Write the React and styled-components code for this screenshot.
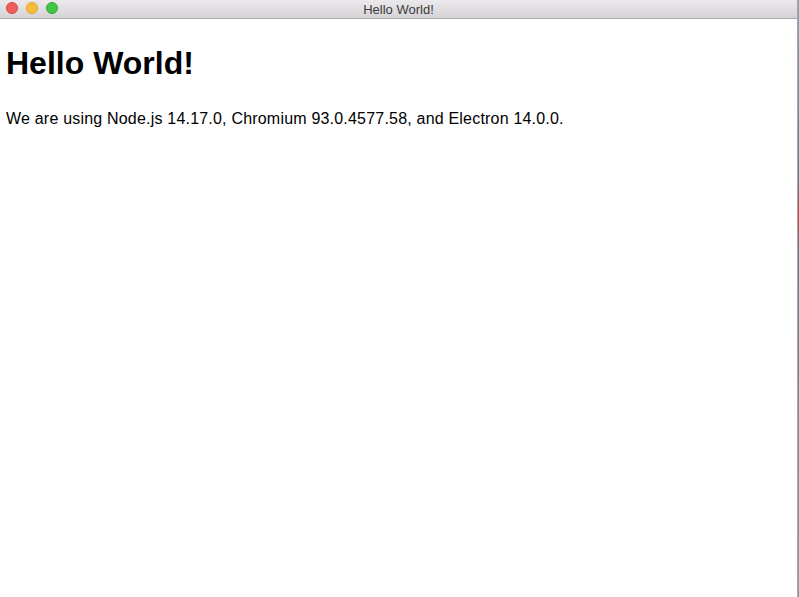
import React from 'react';
import styled, { createGlobalStyle } from 'styled-components';

const GlobalStyle = createGlobalStyle`
  html, body {
    margin: 0;
    padding: 0;
    height: 100%;
    background: #6f8fa6;
    overflow: hidden;
  }
  #root {
    height: 100%;
  }
`;

const Desktop = styled.div`
  display: flex;
  height: 597px;
  width: 799px;
  background: linear-gradient(180deg, #7fa3bd 0%, #5a7f98 30%, #c2453a 36%, #5d7f96 42%, #8a9aa6 100%);
`;

const Window = styled.div`
  width: 797px;
  height: 597px;
  display: flex;
  flex-direction: column;
  background: #ffffff;
  border-right: 1px solid #a8a8a8;
`;

const TitleBar = styled.div`
  position: relative;
  flex: 0 0 18px;
  display: flex;
  align-items: center;
  justify-content: center;
  background: linear-gradient(180deg, #ebe9eb 0%, #d5d3d5 100%);
  border-bottom: 1px solid #ababab;
  font-family: "Liberation Sans", Arial, sans-serif;
  font-size: 13px;
  color: #3b3b3b;
`;

const Lights = styled.div`
  position: absolute;
  left: 6px;
  top: 2px;
  display: flex;
  gap: 8px;
`;

const Light = styled.span`
  width: 12px;
  height: 12px;
  border-radius: 50%;
  box-sizing: border-box;
  background: ${p => p.color};
  border: 1px solid ${p => p.edge};
`;

const Content = styled.main`
  flex: 1;
  padding: 0 6px;
  font-family: "Liberation Sans", Arial, sans-serif;
  color: #000;
`;

const Heading = styled.h1`
  margin: 26px 0 0;
  font-size: 32px;
  font-weight: bold;
  line-height: 37px;
`;

const Text = styled.p`
  margin: 28px 0 0;
  font-size: 16px;
  line-height: 18px;
  letter-spacing: 0.2px;
`;

export default function App() {
  return (
    <>
      <GlobalStyle />
      <Desktop>
        <Window>
          <TitleBar>
            <Lights>
              <Light color="#ee5f5a" edge="#d8463f" />
              <Light color="#f6bd3b" edge="#dea22c" />
              <Light color="#43c645" edge="#30a934" />
            </Lights>
            Hello World!
          </TitleBar>
          <Content>
            <Heading>Hello World!</Heading>
            <Text>
              We are using Node.js 14.17.0, Chromium 93.0.4577.58, and Electron 14.0.0.
            </Text>
          </Content>
        </Window>
      </Desktop>
    </>
  );
}
